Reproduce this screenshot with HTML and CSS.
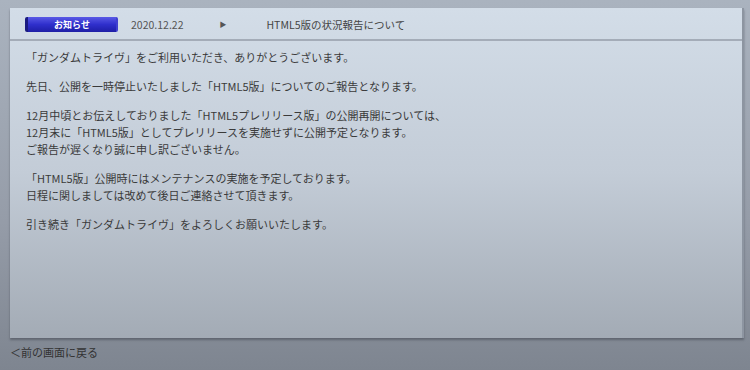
FILE: index.html
```html
<!DOCTYPE html>
<html lang="ja">
<head>
    <meta charset="UTF-8">
    <title>お知らせ</title>
    <link rel="stylesheet" href="styles.css">
</head>
<body>
    <div class="panel">
        <div class="panel-head">
            <span class="badge">お知らせ</span>
            <span class="date">2020.12.22</span>
            <span class="arrow">&#9654;</span>
            <span class="title">HTML5版の状況報告について</span>
        </div>
        <div class="panel-body">
            <p>「ガンダムトライヴ」をご利用いただき、ありがとうございます。</p>
            <p>先日、公開を一時停止いたしました「HTML5版」についてのご報告となります。</p>
            <p>12月中頃とお伝えしておりました「HTML5プレリリース版」の公開再開については、<br>
               12月末に「HTML5版」としてプレリリースを実施せずに公開予定となります。<br>
               ご報告が遅くなり誠に申し訳ございません。</p>
            <p>「HTML5版」公開時にはメンテナンスの実施を予定しております。<br>
               日程に関しましては改めて後日ご連絡させて頂きます。</p>
            <p>引き続き「ガンダムトライヴ」をよろしくお願いいたします。</p>
        </div>
    </div>
    <div class="back">＜前の画面に戻る</div>
</body>
</html>
```

FILE: styles.css
```css
body {
    margin: 0;
    height: 370px;
    overflow: hidden;
    font-family: "Noto Sans CJK JP", "Noto Sans", sans-serif;
    font-size: 11px;
    color: #3a3a3a;
    background: linear-gradient(#aab3bf, #959ca8 60%, #7e8590);
}

.panel {
    margin: 8px 6px 0 10px;
    height: 330px;
    box-sizing: border-box;
    background: linear-gradient(#d3dde8, #c3ccd7 50%, #a3abb5);
    border-right: 2px solid #8d95a1;
    box-shadow: 0 2px 2px rgba(60, 66, 76, 0.5);
}

.panel-head {
    height: 33px;
    box-sizing: border-box;
    border-bottom: 2px solid #a4acb8;
    display: flex;
    align-items: center;
    padding: 1px 0 0 15px;
}

.badge {
    width: 93px;
    height: 15px;
    line-height: 15px;
    text-align: center;
    font-size: 9px;
    font-weight: bold;
    color: #fff;
    background: linear-gradient(#5a5ae6, #2f2fcc 50%, #1e1ea6);
    border-left: 3px solid #1a1a80;
    border-right: 2px solid #4040d0;
    border-radius: 2px;
    box-sizing: border-box;
}

.date {
    margin-left: 13px;
    color: #555;
    font-size: 10.5px;
}

.arrow {
    margin-left: 36px;
    font-size: 7px;
    color: #555;
}

.title {
    margin-left: 40px;
    color: #444;
    font-size: 10.5px;
}

.panel-body {
    padding: 8px 16px;
}

.panel-body p {
    margin: 0 0 12px;
    line-height: 17px;
}

.back {
    margin: 6px 0 0 10px;
    color: #333;
}
```
